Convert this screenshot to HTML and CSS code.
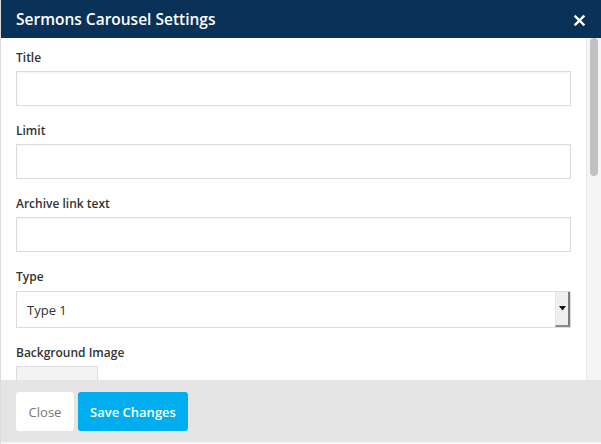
FILE: index.html
```html
<!DOCTYPE html>
<html>
<head>
<meta charset="utf-8">
<link rel="stylesheet" href="styles.css">
</head>
<body>
<div class="modal">
  <div class="modal-header">
    <h1 class="modal-title">Sermons Carousel Settings</h1>
    <button class="close-x" aria-label="Close">
      <svg width="11" height="11" viewBox="0 0 11 11"><path d="M1.5 1.5 L9.5 9.5 M9.5 1.5 L1.5 9.5" stroke="#fff" stroke-width="2.4" stroke-linecap="square"/></svg>
    </button>
  </div>
  <div class="modal-body">
    <div class="form">
      <div class="field">
        <label class="label">Title</label>
        <input class="input" type="text">
      </div>
      <div class="field">
        <label class="label">Limit</label>
        <input class="input" type="text">
      </div>
      <div class="field">
        <label class="label">Archive link text</label>
        <input class="input" type="text">
      </div>
      <div class="field">
        <label class="label">Type</label>
        <div class="select-wrap">
          <select class="select"><option>Type 1</option><option>Type 2</option></select>
          <span class="select-btn"><svg width="7" height="5" viewBox="0 0 7 5"><path d="M0 0 H7 L3.5 4.5 Z" fill="#111"/></svg></span>
        </div>
      </div>
      <div class="field">
        <label class="label">Background Image</label>
        <div class="image-box"></div>
      </div>
    </div>
    <div class="scrollbar"><div class="scroll-thumb"></div></div>
  </div>
  <div class="modal-footer">
    <button class="btn btn-close">Close</button>
    <button class="btn btn-save">Save Changes</button>
  </div>
  <div class="bottom-edge"></div>
</div>
</body>
</html>
```
FILE: styles.css
```css
* { box-sizing: border-box; }
html, body { margin: 0; padding: 0; }
body {
  font-family: "Open Sans", "Liberation Sans", sans-serif;
  color: #333;
  background: #fff;
  width: 601px;
  height: 444px;
  overflow: hidden;
}
.modal {
  display: flex;
  flex-direction: column;
  width: 601px;
  height: 444px;
  border-left: 1px solid #dcdcdc;
}
.modal-header {
  height: 38px;
  flex: none;
  background: #0a3157;
  display: flex;
  align-items: center;
  justify-content: space-between;
  padding: 0 16px 0 15px;
}
.modal-title {
  margin: 0;
  color: #fff;
  font-size: 15.5px;
  font-weight: 600;
  line-height: 20px;
}
.close-x {
  border: 0;
  background: none;
  padding: 0;
  margin-top: 3px;
  display: flex;
  cursor: pointer;
}
.modal-body {
  height: 342px;
  flex: none;
  display: flex;
  overflow: hidden;
  background: #fff;
}
.form {
  flex: 1;
  padding: 11px 15px 0 15px;
  overflow: hidden;
}
.scrollbar {
  width: 15px;
  flex: none;
  background: #f5f5f5;
  border-left: 1px solid #e8e8e8;
  padding: 0 3px 0 3px;
}
.scroll-thumb {
  width: 8px;
  height: 138px;
  background: #c1c1c1;
  border-radius: 4px;
}
.field {
  display: flex;
  flex-direction: column;
  margin-bottom: 16px;
}
.label {
  font-size: 12px;
  font-weight: 600;
  line-height: 18px;
  color: #333;
  margin-bottom: 4px;
}
.input {
  height: 35px;
  border: 1px solid #dcdcdc;
  box-shadow: inset 0 1px 2px rgba(0,0,0,0.05);
  background: #fff;
  font: inherit;
  padding: 0 10px;
  outline: none;
}
.select-wrap {
  display: flex;
  height: 37px;
  border: 1px solid #dcdcdc;
  margin-top: 1px;
  background: #fff;
}
.select {
  flex: 1;
  appearance: none;
  -webkit-appearance: none;
  border: 0;
  background: transparent;
  font-family: inherit;
  font-size: 13px;
  color: #333;
  padding: 0 10px;
  outline: none;
}
.select-btn {
  width: 15px;
  flex: none;
  background: #efefef;
  border-left: 1px solid #e4e4e4;
  border-right: 2px solid #7a7a7a;
  border-bottom: 2px solid #8a8a8a;
  display: flex;
  align-items: center;
  justify-content: center;
}
.image-box {
  width: 82px;
  height: 82px;
  flex: none;
  background: #f3f3f3;
  border: 1px solid #dcdcdc;
}
.modal-footer {
  height: 62px;
  flex: none;
  background: #e5e5e5;
  display: flex;
  align-items: flex-start;
  gap: 4px;
  padding: 12px 15px 0;
}
.btn {
  height: 39px;
  border: 0;
  border-radius: 3px;
  font-family: inherit;
  font-size: 13px;
  cursor: pointer;
}
.btn-close {
  width: 58px;
  background: #fff;
  color: #777;
}
.btn-save {
  width: 110px;
  background: #00aeef;
  color: #fff;
  font-weight: 600;
}
.bottom-edge {
  flex: 1;
  background: #f6f6f6;
}
```
